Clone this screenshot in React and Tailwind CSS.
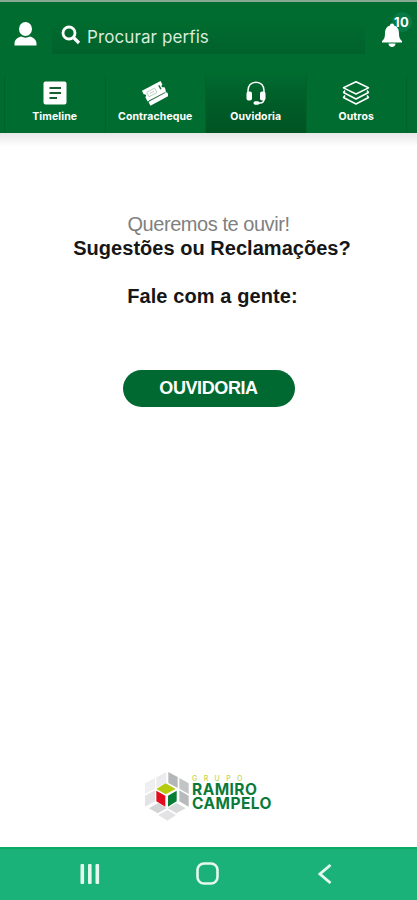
import React from "react";

const TimelineIcon = () => (
  <svg width="24" height="24" viewBox="0 0 24 24">
    <rect x="0.500" y="0.500" width="23" height="23" rx="2" fill="#fff" />
    <path
      d="M6.500 7h11.500M6.500 12h11.500M6.500 17h7.500"
      stroke="#17602f"
      strokeWidth="2"
      fill="none"
    />
  </svg>
);

const PaycheckIcon = () => (
  <svg width="26" height="26" viewBox="0 0 26 26">
    <g transform="rotate(-28 13 13)">
      <path d="M3 12h21v3a1.500 1.500 0 0 0 0 3V22h-21v-4a1.500 1.500 0 0 0 0-3z" fill="#fff" />
      <path
        d="M2.500 5h21v4a1.500 1.500 0 0 0 0 3V17h-21v-5a1.500 1.500 0 0 0 0-3z"
        fill="#fff"
      />
      <path d="M4 17.300h18" stroke="#26703f" strokeWidth="0.900" />
      <path
        d="M6 8.500h9v5H6zM8 11h5"
        fill="none"
        stroke="#b0c9b7"
        strokeWidth="0.800"
      />
      <path d="M20 8v4.500" stroke="#26703f" strokeWidth="1.500" />
    </g>
  </svg>
);

const HeadsetIcon = () => (
  <svg width="22" height="24" viewBox="0 0 22 24" fill="none" stroke="#fff">
    <path
      d="M3 12V9.500C3 4.800 6 1.200 11 1.200s8 3.600 8 8.300V18c0 3-1.500 4-4 4h-3"
      strokeWidth="1.500"
    />
    <rect x="1.500" y="10.500" width="5.500" height="9" rx="2" fill="#fff" stroke="none" />
    <rect x="15" y="10.500" width="5.500" height="9" rx="2" fill="#fff" stroke="none" />
    <rect x="8.500" y="20.300" width="6" height="3.400" rx="1.700" fill="#fff" stroke="none" />
  </svg>
);

const LayersIcon = () => (
  <svg
    width="28"
    height="24"
    viewBox="0 0 28 24"
    fill="none"
    stroke="#fff"
    strokeWidth="1.500"
    strokeLinejoin="round"
  >
    <path d="M14 0.800l12.500 6L14 13 1.500 6.800z" />
    <path d="M3 9.500l-1.500 2L14 18l12.500-6.500-1.500-2" />
    <path d="M3 14.500l-1.500 2L14 23l12.500-6.500-1.500-2" />
  </svg>
);

const Logo = () => (
  <svg width="46" height="52" viewBox="27 34 138 156">
    <path d="M94 37v33L64 84V53z" fill="#ececee" />
    <path d="M60 55v32L30 103V71z" fill="#efeff1" />
    <path d="M60 92v33L30 141v-33z" fill="#e3e3e5" />
    <path d="M100 37l28 15v33l-28-15z" fill="#b5b6b8" />
    <path d="M133 55l28 16v32l-28-16z" fill="#c3c4c6" />
    <path d="M133 92l28 16v33l-28-16z" fill="#b9babc" />
    <path d="M70 130l25 16-27 15-26-15z" fill="#d3d4d6" />
    <path d="M124 130l28 16-28 15-26-15z" fill="#d9dadc" />
    <path d="M97 151l26 15-26 17-27-17z" fill="#e3e3e5" />
    <path d="M92 71l30 17-30 16-28-16z" fill="#b5cb10" />
    <path d="M64 93l27 15v33l-27-16z" fill="#e30d20" />
    <path d="M99 108l26-15v32l-26 16z" fill="#087d36" />
  </svg>
);

const tabs = [
  { label: "Timeline", Icon: TimelineIcon },
  { label: "Contracheque", Icon: PaycheckIcon },
  { label: "Ouvidoria", Icon: HeadsetIcon, active: true },
  { label: "Outros", Icon: LayersIcon },
];

const Header = () => (
  <header className="h-[133px] flex flex-col bg-[#006c30] border-t-2 border-[#86a991] text-white shrink-0">
    <div className="h-[73px] flex items-start pl-[14px] pr-[5px]">
      <svg className="mt-[20px]" width="24" height="24" viewBox="0 0 24 24" fill="#fff">
        <ellipse cx="11.500" cy="7" rx="6.500" ry="7" />
        <path d="M0.500 23.500v-2c0-3.500 3-6 6.500-7 3 1.500 6 1.500 9 0 3.500 1 6.500 3.500 6.500 7v2z" />
      </svg>
      <div className="ml-[14px] mt-[18px] w-[313px] h-[34px] flex items-center pl-[9px] bg-linear-to-b from-[#006c30] to-[#00622b]">
        <svg className="-mt-[5px]" width="20" height="20" viewBox="0 0 20 20" fill="none" stroke="#fff">
          <circle cx="8" cy="8" r="6" strokeWidth="2.800" />
          <path d="M12.500 12.500l5.500 5.500" strokeWidth="3.200" />
        </svg>
        <span className="ml-[6px] text-[17px] leading-5 tracking-[0.1px] text-[#d8ebdf] whitespace-nowrap">
          Procurar perfis
        </span>
      </div>
      <div className="relative ml-[16px] mt-[10px] w-[31px] h-[36px]">
        <span className="absolute left-[11px] top-0 size-[20px] rounded-full bg-[#087a48]" />
        <svg className="absolute left-0 top-[11px]" width="22" height="25" viewBox="0 0 22 25" fill="#fff">
          <path d="M11 0.500c1.300 0 2 .8 2 2 3.500 1 5 4 5 8 0 4 1 6 3 7.500V19.500H1V18c2-1.500 3-3.500 3-7.500 0-4 1.500-7 5-8 0-1.200.7-2 2-2z" />
          <path d="M7.500 20.500h7c0 2-1.500 3.500-3.500 3.500s-3.500-1.500-3.500-3.500z" />
        </svg>
        <span className="absolute left-[13px] top-[3px] text-[13px] leading-[14px] font-bold tracking-[0.3px]">
          10
        </span>
      </div>
    </div>
    <nav className="flex-1 flex pl-[4px]">
      {tabs.map(({ label, Icon, active }) => (
        <div
          key={label}
          className={`w-[100.5px] flex flex-col items-center border-l border-[#00632b] ${
            active ? "bg-linear-to-b from-[#006a2f] via-[#005c27] to-[#005423]" : ""
          }`}
        >
          <div className="mt-[5px] h-[26px] flex items-center">
            <Icon />
          </div>
          <span className="mt-[4px] text-[10.5px] leading-[14px] font-bold tracking-[0.1px]">
            {label}
          </span>
        </div>
      ))}
      <div className="flex-1 border-l border-[#00632b]" />
    </nav>
  </header>
);

const App = () => {
  return (
    <div className="w-[417px] h-[900px] flex flex-col bg-white font-['Inter',sans-serif] overflow-hidden">
      <Header />
      <div className="h-[14px] bg-linear-to-b from-[#e7e8e7] to-white shrink-0" />

      <main className="flex-1 flex flex-col items-center font-['Liberation_Sans',sans-serif] text-[#161616]">
        <p className="mt-[65px] text-[20px] leading-[24px] tracking-[-0.45px] text-[#808080]">
          Queremos te ouvir!
        </p>
        <h1 className="ml-[7px] text-[20px] leading-[24px] font-bold tracking-[0.03px] whitespace-nowrap">
          Sugestões ou Reclamações?
        </h1>
        <h2 className="ml-[8px] mt-[24px] text-[20px] leading-[24px] font-bold tracking-[0.1px]">
          Fale com a gente:
        </h2>
        <button className="mt-[62px] w-[172px] h-[37px] rounded-full bg-[#006932] text-white text-[18px] font-bold tracking-[-0.4px]">
          OUVIDORIA
        </button>

        <div className="mt-auto mb-[24px] -ml-[1px] flex items-start">
          <Logo />
          <div className="ml-[2px] mt-[3px] flex flex-col font-['Inter',sans-serif]">
            <span className="text-[7px] leading-[9px] tracking-[6.4px] font-medium text-[#c4d34c]">
              GRUPO
            </span>
            <p className="text-[15.5px] leading-[14px] font-bold text-[#0b7a38] tracking-[0.45px]">
              RAMIRO
              <br />
              CAMPELO
            </p>
          </div>
        </div>
      </main>

      <footer className="h-[53px] bg-[#1bb27a] border-t-2 border-[#08a965] shrink-0 flex items-center pl-[80px] pb-[2px]">
        <svg width="20" height="20" viewBox="0 0 20 20" fill="#e5f7ef">
          <rect x="0.500" width="3.600" height="20" rx="1" />
          <rect x="8" width="3.600" height="20" rx="1" />
          <rect x="15.500" width="3.600" height="20" rx="1" />
        </svg>
        <svg className="ml-[96px]" width="23" height="23" viewBox="0 0 23 23" fill="none" stroke="#e5f7ef">
          <rect x="1.500" y="1.500" width="20" height="20" rx="6.500" strokeWidth="2.600" />
        </svg>
        <svg className="ml-[99px]" width="14" height="20" viewBox="0 0 14 20" fill="none" stroke="#e5f7ef">
          <path d="M12.500 1L2 10l10.500 9" strokeWidth="2.800" />
        </svg>
      </footer>
    </div>
  );
};

export default App;
